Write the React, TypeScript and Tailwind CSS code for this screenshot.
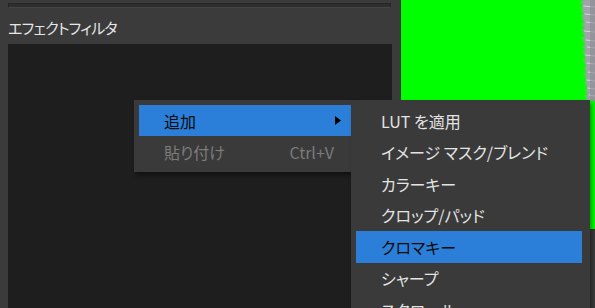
import React from 'react';

const font = { fontFamily: '"Noto Sans CJK JP", "Noto Sans", sans-serif' };

const subItems = [
    'LUT を適用',
    'イメージ マスク/ブレンド',
    'カラーキー',
    'クロップ/パッド',
    'クロマキー',
    'シャープ',
    'スクロール',
];

// jagged grey fur on the right edge of the preview
const Fur: React.FC = () => {
    const pts: string[] = ['16,0'];
    for (let y = 0; y <= 100; y += 2) {
        const base = 3 + (y / 100) * 5;
        const spike = (((y * 37) % 11) / 11) * 4;
        pts.push(`${(base - spike).toFixed(1)},${y}`);
        pts.push(`${(base + 1.5).toFixed(1)},${y + 1}`);
    }
    pts.push('16,101');
    const streaks = [6, 14, 22, 31, 40, 47, 55, 63, 72, 80, 88, 95];
    return (
        <svg width="16" height="101" className="absolute right-0 top-0">
            <polygon points={pts.join(' ')} fill="#a2a2aa" />
            {streaks.map((y, i) => (
                <line key={y} x1={4 + (i % 3) + y / 25} y1={y} x2="16" y2={y + 1} stroke="#d4d4dc" strokeWidth="1" />
            ))}
            <rect x="11" y="0" width="5" height="101" fill="#8a8a92" opacity="0.6" />
        </svg>
    );
};

const App: React.FC = () => {
    return (
        <div className="relative w-[595px] h-[308px] overflow-hidden bg-[#3b3b3b] [font-feature-settings:'palt']" style={font}>
            <div className="flex flex-row h-full">
                <div className="w-[401px] flex flex-col pl-[8px] pr-[9px] pt-[3px]">
                    <div className="h-[5px] w-[383px] border border-[#262626] border-b-[#454545] bg-[#2e2e2e]"></div>
                    <div className="h-[36px] flex items-center text-[15px] tracking-[-0.7px] text-[#e6e6e6] leading-none pt-[2px]">エフェクトフィルタ</div>
                    <div className="flex-1 bg-[#1e1e1e]"></div>
                </div>
                <div className="flex-1 flex flex-col">
                    <div className="relative h-[229px] bg-[#00ff00]">
                        <Fur />
                    </div>
                </div>
            </div>

            {/* context menu */}
            <div className="absolute left-[134px] top-[100px] w-[217px] pl-[5px] py-[5px] bg-[#3a3a3a] shadow-[2px_3px_4px_rgba(0,0,0,0.45)]">
                <div className="relative h-[31px] flex items-center pl-[25px] bg-[#2b7fd8] text-[16px] text-[#0a0a0a]">
                    追加
                    <svg width="6" height="9" className="absolute left-[196px] top-[11px]">
                        <polygon points="0,0 6,4.5 0,9" fill="#000" />
                    </svg>
                </div>
                <div className="h-[31px] flex items-center justify-between pl-[25px] pr-[17px] text-[16px] text-[#7c7c7c]">
                    <span>貼り付け</span>
                    <span>Ctrl+V</span>
                </div>
            </div>

            {/* sub menu */}
            <div className="absolute left-[351px] top-[100px] w-[239px] h-[230px] pt-[5px] pl-[5px] pr-[8px] bg-[#3a3a3a] shadow-[2px_3px_4px_rgba(0,0,0,0.4)]">
                {subItems.map((item) => (
                    <div
                        key={item}
                        className={
                            item === 'クロマキー'
                                ? 'h-[31.5px] flex items-center pl-[25px] bg-[#2b7fd8] text-[16px] text-[#0a0a0a]'
                                : 'h-[31.5px] flex items-center pl-[25px] text-[16px] text-[#e4e4e4]'
                        }
                    >
                        {item}
                    </div>
                ))}
            </div>
        </div>
    );
};

export default App;
